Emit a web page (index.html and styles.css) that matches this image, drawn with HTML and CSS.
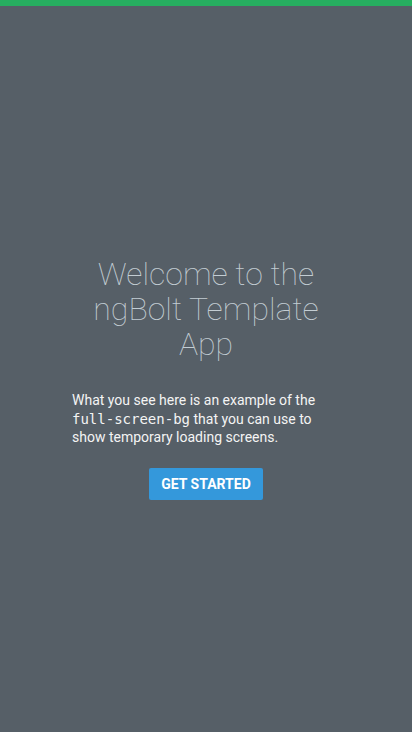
FILE: index.html
```html
<!DOCTYPE html>
<html>
<head>
<meta charset="utf-8">
<link rel="stylesheet" href="styles.css">
</head>
<body>
<div class="topbar"></div>
<main class="screen">
  <div class="content">
    <h1 class="title">Welcome to the ngBolt Template App</h1>
    <p class="text">What you see here is an example of the <code>full-screen-bg</code> that you can use to show temporary loading screens.</p>
    <div class="actions"><button class="btn">GET STARTED</button></div>
  </div>
</main>
</body>
</html>
```
FILE: styles.css
```css
html, body { margin: 0; padding: 0; height: 100%; }
body {
  background: #565f67;
  font-family: Roboto, "Noto Sans", sans-serif;
  display: flex;
  flex-direction: column;
}
.topbar { height: 6px; background: #27ae60; flex: none; }
.screen {
  flex: 1;
  display: flex;
  justify-content: center;
  padding-top: 251px;
}
.content { width: 268px; }
.title {
  margin: 0;
  font-weight: 100;
  font-size: 32px;
  line-height: 35px;
  text-align: center;
  color: #c3cdd3;
}
.text {
  margin: 29px 0 0;
  font-size: 14px;
  line-height: 18.5px;
  color: #f4f4f4;
}
.text code {
  font-family: "DejaVu Sans Mono", monospace;
  font-size: 14px;
  line-height: 1;
}
.actions { display: flex; justify-content: center; margin-top: 21px; }
.btn {
  background: #3498db;
  color: #fff;
  border: 0;
  border-radius: 2px;
  font-family: Roboto, sans-serif;
  font-weight: 700;
  font-size: 14px;
  width: 114px;
  height: 32px;
  padding: 0;
}
```
